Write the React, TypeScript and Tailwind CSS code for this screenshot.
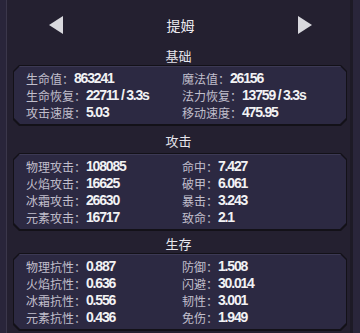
import React from "react";

type Stat = [string, string];

// gap = space above the section title, head = height of the title row
const sections: { title: string; gap: string; head: string; left: Stat[]; right: Stat[] }[] = [
  {
    title: "基础",
    gap: "mt-0",
    head: "h-[18px]",
    left: [
      ["生命值", "863241"],
      ["生命恢复", "22711 / 3.3s"],
      ["攻击速度", "5.03"],
    ],
    right: [
      ["魔法值", "26156"],
      ["法力恢复", "13759 / 3.3s"],
      ["移动速度", "475.95"],
    ],
  },
  {
    title: "攻击",
    gap: "mt-[6px]",
    head: "h-[21px]",
    left: [
      ["物理攻击", "108085"],
      ["火焰攻击", "16625"],
      ["冰霜攻击", "26630"],
      ["元素攻击", "16717"],
    ],
    right: [
      ["命中", "7.427"],
      ["破甲", "6.061"],
      ["暴击", "3.243"],
      ["致命", "2.1"],
    ],
  },
  {
    title: "生存",
    gap: "mt-[4px]",
    head: "h-[18px]",
    left: [
      ["物理抗性", "0.887"],
      ["火焰抗性", "0.636"],
      ["冰霜抗性", "0.556"],
      ["元素抗性", "0.436"],
    ],
    right: [
      ["防御", "1.508"],
      ["闪避", "30.014"],
      ["韧性", "3.001"],
      ["免伤", "1.949"],
    ],
  },
];

const bevel =
  "[clip-path:polygon(6px_0,calc(100%-6px)_0,100%_6px,100%_calc(100%-6px),calc(100%-6px)_100%,6px_100%,0_calc(100%-6px),0_6px)]";

function StatRow({ stat }: { stat: Stat }) {
  return (
    <div className="flex h-[17px] items-center whitespace-nowrap">
      <span className="text-[12px] text-[#c1bfcc] font-['Noto_Sans_CJK_SC',sans-serif]">
        {stat[0]}：
      </span>
      <span className="text-[14px] font-bold tracking-[-1.2px] text-[#f2f2f4] font-['Liberation_Sans',sans-serif]">
        {stat[1]}
      </span>
    </div>
  );
}

function Panel({ left, right }: { left: Stat[]; right: Stat[] }) {
  return (
    <div className={`ml-[6px] mr-[3px] bg-[#131118] p-[1px] pb-[2px] ${bevel}`}>
      <div
        className={`grid grid-cols-[156px_1fr] bg-[#2c2942] pl-[12px] pt-[4px] pb-[3px] shadow-[inset_0_1px_0_#3c3954] ${bevel}`}
      >
        <div className="flex flex-col">
          {left.map((s) => (
            <StatRow key={s[0]} stat={s} />
          ))}
        </div>
        <div className="flex flex-col">
          {right.map((s) => (
            <StatRow key={s[0]} stat={s} />
          ))}
        </div>
      </div>
    </div>
  );
}

export default function App() {
  return (
    <div className="w-[360px] h-[333px] overflow-hidden bg-[#29253a] pl-[6px] pr-[7px] font-['Noto_Sans_CJK_SC',sans-serif]">
      <div className="h-full border-l border-l-[#3b374b] border-r-[3px] border-r-[#1d1a26] bg-[#242030]">
        <div className="flex h-[47px] items-center justify-between pt-[3px] pl-[42px] pr-[38px]">
          <svg width="14" height="18" viewBox="0 0 14 18">
            <polygon points="14,0 14,18 0,9" fill="#d9d9de" />
          </svg>
          <span className="text-[14px] text-[#ecebf0]">提姆</span>
          <svg width="14" height="18" viewBox="0 0 14 18">
            <polygon points="0,0 0,18 14,9" fill="#d9d9de" />
          </svg>
        </div>
        {sections.map((sec) => (
          <div key={sec.title} className={`flex flex-col ${sec.gap}`}>
            <div className={`${sec.head} text-center text-[13px] leading-[18px] text-[#e6e5ec]`}>
              {sec.title}
            </div>
            <Panel left={sec.left} right={sec.right} />
          </div>
        ))}
      </div>
    </div>
  );
}
